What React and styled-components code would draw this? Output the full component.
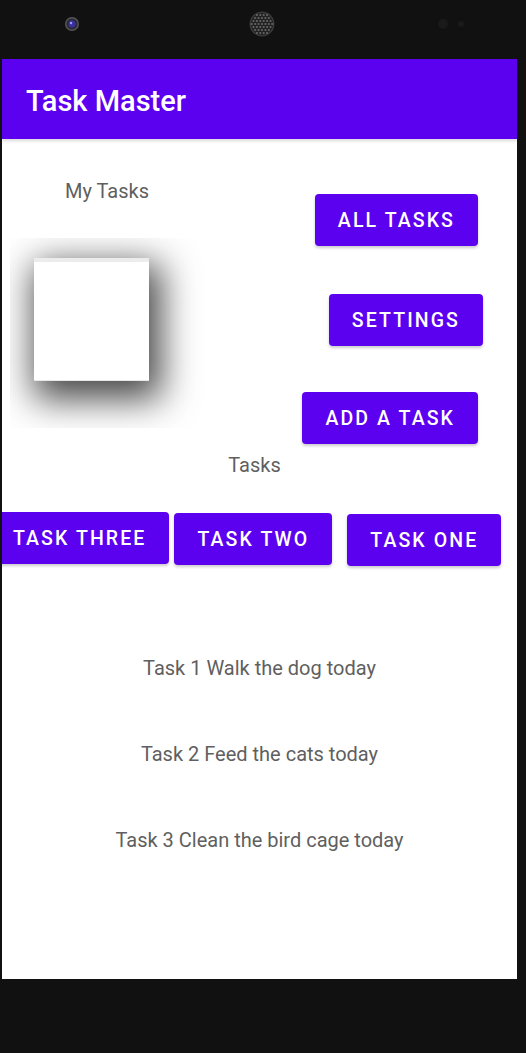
import styled, { createGlobalStyle } from 'styled-components';

const GlobalStyle = createGlobalStyle`
  html, body {
    margin: 0;
    padding: 0;
    background: #111111;
    font-family: Roboto, "Noto Sans", sans-serif;
  }
`;

const topButtons = [
  { label: 'ALL TASKS', right: 39, top: 55 },
  { label: 'SETTINGS', right: 34, top: 48 },
  { label: 'ADD A TASK', right: 39, top: 46 },
];

const taskButtons = [
  { label: 'TASK THREE', top: 0, left: -12 },
  { label: 'TASK TWO', top: 1, left: 5 },
  { label: 'TASK ONE', top: 2, left: 15 },
];

const tasks = [
  'Task 1 Walk the dog today',
  'Task 2 Feed the cats today',
  'Task 3 Clean the bird cage today',
];

// speaker grill holes, laid out in a hex pattern
const grillHoles = [];
for (let row = -3; row <= 3; row++) {
  const count = 7 - Math.abs(row);
  for (let i = 0; i < count; i++) {
    const x = 13 + (i - (count - 1) / 2) * 3.4;
    const y = 13 + row * 3;
    grillHoles.push([x, y]);
  }
}

export default function App() {
  return (
    <Phone>
      <GlobalStyle />
      <Bezel>
        <svg width="16" height="16" viewBox="0 0 16 16" style={{ marginLeft: 62 }}>
          <circle cx="8" cy="8" r="7" fill="#555" />
          <circle cx="8" cy="8" r="5.5" fill="#2a2a3a" />
          <circle cx="8" cy="8" r="3.5" fill="#3a30a0" />
          <circle cx="7" cy="7" r="1.2" fill="#9aa0ff" />
        </svg>
        <svg width="26" height="26" viewBox="0 0 26 26" style={{ marginLeft: 169 }}>
          <circle cx="13" cy="13" r="12.5" fill="#3a3a3a" />
          <circle cx="13" cy="13" r="11" fill="#222" />
          {grillHoles.map(([x, y]) => (
            <circle key={`${x}-${y}`} cx={x} cy={y} r="1.1" fill="#666" />
          ))}
        </svg>
        <svg width="30" height="12" viewBox="0 0 30 12" style={{ marginLeft: 162 }}>
          <circle cx="6" cy="6" r="5" fill="#1a1a1a" />
          <circle cx="24" cy="6" r="3" fill="#1a1a1a" />
        </svg>
      </Bezel>
      <Screen>
        <AppBar>Task Master</AppBar>
        <Content>
          <TopSection>
            <LeftColumn>
              <Heading>My Tasks</Heading>
              <PictureFrame>
                <Picture />
              </PictureFrame>
            </LeftColumn>
            <ButtonColumn>
              {topButtons.map((b) => (
                <ActionButton key={b.label} $right={b.right} $top={b.top}>
                  {b.label}
                </ActionButton>
              ))}
            </ButtonColumn>
          </TopSection>
          <SectionLabel>Tasks</SectionLabel>
          <TaskRow>
            {taskButtons.map((b) => (
              <TaskButton key={b.label} $top={b.top} $left={b.left}>
                {b.label}
              </TaskButton>
            ))}
          </TaskRow>
          <TaskList>
            {tasks.map((t) => (
              <TaskItem key={t}>{t}</TaskItem>
            ))}
          </TaskList>
        </Content>
      </Screen>
    </Phone>
  );
}

const Phone = styled.div`
  box-sizing: border-box;
  width: 526px;
  height: 1053px;
  padding: 0 9px 0 2px;
  background: #111111;
`;

const Bezel = styled.div`
  height: 59px;
  display: flex;
  align-items: center;
  padding-bottom: 12px;
  box-sizing: border-box;
`;

const Screen = styled.div`
  width: 515px;
  height: 920px;
  background: #ffffff;
  overflow: hidden;
  display: flex;
  flex-direction: column;
`;

const AppBar = styled.header`
  height: 80px;
  flex-shrink: 0;
  display: flex;
  align-items: center;
  padding: 3px 0 0 24px;
  box-sizing: border-box;
  background: #5c00f0;
  color: #ffffff;
  font-size: 29px;
  font-weight: 500;
  box-shadow: 0 2px 3px rgba(0, 0, 0, 0.15);
`;

const Content = styled.main`
  display: flex;
  flex-direction: column;
`;

const TopSection = styled.section`
  display: flex;
  justify-content: space-between;
`;

const LeftColumn = styled.div`
  display: flex;
  flex-direction: column;
  padding-top: 40px;
`;

const Heading = styled.div`
  margin-left: 63px;
  font-size: 20px;
  line-height: 24px;
  color: #5f5f5f;
`;

const PictureFrame = styled.div`
  margin: 35px 0 0 8px;
  width: 195px;
  height: 190px;
  overflow: hidden;
  display: flex;
`;

const Picture = styled.div`
  margin: 20px 0 0 24px;
  width: 115px;
  height: 118px;
  background: #ffffff;
  border-top: 4px solid #ececec;
  border-bottom: 1px solid #e8e8e8;
  box-shadow: 6px 12px 34px 6px rgba(0, 0, 0, 0.72);
`;

const ButtonColumn = styled.div`
  display: flex;
  flex-direction: column;
  align-items: flex-end;
`;

const buttonBase = `
  box-sizing: border-box;
  height: 52px;
  display: flex;
  align-items: center;
  justify-content: center;
  border: none;
  border-radius: 4px;
  background: #5c00f0;
  color: #ffffff;
  font-family: Roboto, "Noto Sans", sans-serif;
  font-size: 19.5px;
  font-weight: 500;
  letter-spacing: 2.1px;
  box-shadow: 0 2px 3px rgba(0, 0, 0, 0.2);
`;

const ActionButton = styled.button`
  ${buttonBase}
  margin-top: ${(p) => p.$top}px;
  margin-right: ${(p) => p.$right}px;
  padding: 0 23px;
`;

const SectionLabel = styled.div`
  margin: 9px 0 0 -10px;
  text-align: center;
  font-size: 20px;
  line-height: 24px;
  color: #5f5f5f;
`;

const TaskRow = styled.div`
  display: flex;
  align-items: flex-start;
  margin-top: 35px;
`;

const TaskButton = styled.button`
  ${buttonBase}
  flex-shrink: 0;
  margin-top: ${(p) => p.$top}px;
  margin-left: ${(p) => p.$left}px;
  padding: 0 23px;
`;

const TaskList = styled.ul`
  list-style: none;
  margin: 90px 0 0;
  padding: 0;
  display: flex;
  flex-direction: column;
  gap: 62px;
`;

const TaskItem = styled.li`
  text-align: center;
  font-size: 20px;
  line-height: 24px;
  color: #5f5f5f;
`;
